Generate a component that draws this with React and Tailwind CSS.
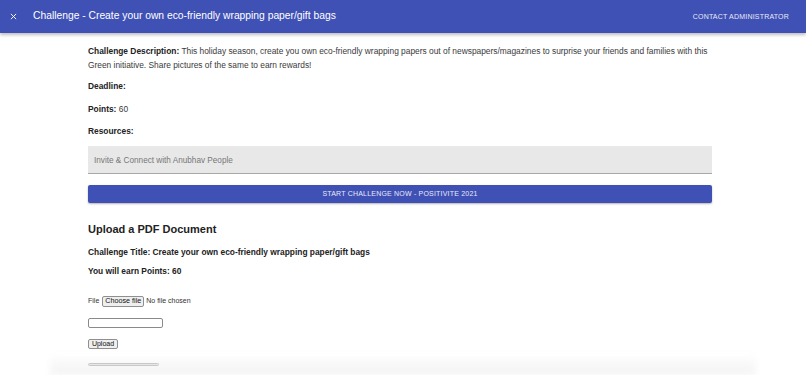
import React from 'react';

function Header() {
  return (
    <div className="relative z-20 flex h-[33px] items-center bg-[#3f51b5] text-white shadow-[0_2px_3px_rgba(0,0,0,0.25)]">
      <svg className="ml-[10px] h-[7px] w-[7px]" viewBox="0 0 24 24" fill="none" stroke="currentColor" strokeWidth={3.2}>
        <path d="M3 3l18 18M21 3L3 21" />
      </svg>
      <h1 className="ml-[16px] text-[10.3px] leading-none">Challenge - Create your own eco-friendly wrapping paper/gift bags</h1>
      <button className="ml-auto mr-[17px] text-[7px] font-medium uppercase leading-none tracking-[0.2px] text-[#e8eaf6]">
        Contact Administrator
      </button>
    </div>
  );
}

export default function App() {
  return (
    <div className="relative h-[375px] overflow-hidden bg-white font-['Liberation_Sans',Arial,sans-serif] text-[#3a3a3a]">
      <Header />

      {/* faint shadow of the card below */}
      <div className="absolute bottom-0 left-[50px] right-[50px] h-[22px] bg-gradient-to-b from-white to-[#f3f3f3] blur-[3px]"></div>

      <div className="relative z-10 ml-[88px] w-[624px] pt-[11px]">
        <p className="text-[8.4px] leading-[14px]">
          <b className="text-[#222]">Challenge Description:</b> This holiday season, create you own eco-friendly wrapping papers out of newspapers/magazines to surprise your friends and families with this Green initiative. Share pictures of the same to earn rewards!
        </p>
        <p className="mt-[7px] text-[8.4px] leading-[14px]">
          <b className="text-[#222]">Deadline:</b>
        </p>
        <p className="mt-[9px] text-[8.4px] leading-[14px]">
          <b className="text-[#222]">Points:</b> 60
        </p>
        <p className="mt-[8px] text-[8.4px] leading-[14px]">
          <b className="text-[#222]">Resources:</b>
        </p>

        <div className="mt-[8px] flex h-[28px] items-center border-b border-[#a8a8a8] bg-[#e8e8e8] px-[6px] pt-[3px] text-[8.2px] text-[#777]">
          Invite &amp; Connect with Anubhav People
        </div>

        <button className="mt-[11px] flex h-[18px] w-full items-center justify-center rounded-[2px] bg-[#3f51b5] text-[7px] font-medium uppercase tracking-[0.2px] text-[#e8eaf6] shadow-[0_1px_2px_rgba(0,0,0,0.3)]">
          Start Challenge Now - Positivite 2021
        </button>

        <h2 className="mt-[19px] text-[11px] font-bold leading-[14px] text-[#222]">Upload a PDF Document</h2>
        <p className="mt-[9px] text-[8.4px] font-bold leading-[14px] text-[#222]">
          Challenge Title: Create your own eco-friendly wrapping paper/gift bags
        </p>
        <p className="mt-[5px] text-[8.4px] font-bold leading-[14px] text-[#222]">You will earn Points: 60</p>

        <div className="mt-[18px] flex h-[11px] items-center text-[7px] text-[#333]">
          <span>File</span>
          <span className="ml-[3px] flex h-[11px] w-[42px] items-center justify-center rounded-[2px] border border-[#8f8f8f] bg-[#efefef] text-[7.2px] text-[#111]">
            Choose file
          </span>
          <span className="ml-[2px]">No file chosen</span>
        </div>

        <div className="mt-[11px] h-[10px] w-[75px] rounded-[2px] border border-[#8a8a8a] bg-white"></div>

        <div className="mt-[11px] flex h-[10px] w-[30px] items-center justify-center rounded-[2px] border border-[#8f8f8f] bg-[#efefef] text-[7px] text-[#111]">
          Upload
        </div>

        <div className="mt-[14px] h-[3px] w-[71px] rounded-full border border-[#c8c8c8] bg-[#e6e6e6]"></div>
      </div>
    </div>
  );
}
